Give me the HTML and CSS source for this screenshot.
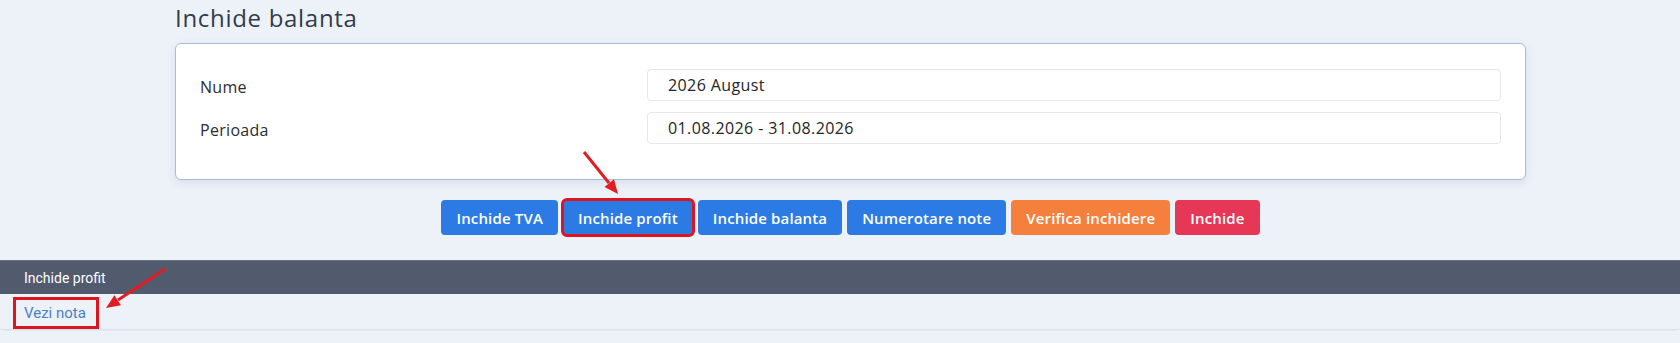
FILE: index.html
```html
<!DOCTYPE html>
<html lang="ro">
<head>
  <meta charset="UTF-8">
  <meta name="viewport" content="width=device-width, initial-scale=1">
  <title>Inchide balanta</title>
  <link rel="stylesheet" href="styles.css">
</head>
<body>
  <div class="page">
    <h2 class="title">Inchide balanta</h2>

    <div class="card">
      <div class="form-row">
        <label for="nume">Nume</label>
        <input type="text" id="nume" value="2026 August">
      </div>
      <div class="form-row">
        <label for="perioada">Perioada</label>
        <input type="text" id="perioada" value="01.08.2026 - 31.08.2026">
      </div>
    </div>

    <div class="actions">
      <button class="btn btn-primary">Inchide TVA</button>
      <button class="btn btn-primary marked">Inchide profit</button>
      <button class="btn btn-primary">Inchide balanta</button>
      <button class="btn btn-primary">Numerotare note</button>
      <button class="btn btn-warning">Verifica inchidere</button>
      <button class="btn btn-danger">Inchide</button>
    </div>
  </div>

  <div class="panel-head">Inchide profit</div>
  <div class="panel-body">
    <a href="#" class="note-link">Vezi nota</a>
  </div>

  <!-- red annotation arrows -->
  <svg class="annot" width="1680" height="343" viewBox="0 0 1680 343">
    <line x1="584" y1="152" x2="609" y2="183" stroke="#e11d24" stroke-width="3"/>
    <polygon points="618,194 604.5,187 614,179.3" fill="#e11d24"/>
    <line x1="165" y1="269" x2="118" y2="300" stroke="#e11d24" stroke-width="3"/>
    <polygon points="106,308 114.4,295.3 121,305.3" fill="#e11d24"/>
  </svg>
</body>
</html>
```

FILE: styles.css
```css
body {
  margin: 0;
  background: #edf2f9;
  font-family: "Open Sans", "Liberation Sans", sans-serif;
  color: #344050;
  position: relative;
  height: 343px;
  overflow: hidden;
}
.page {
  width: 1351px;
  margin-left: 175px;
  padding-top: 4px;
}
.title {
  margin: 0 0 11px;
  font-size: 24px;
  line-height: 28px;
  font-weight: 500;
  letter-spacing: 0.7px;
  color: #313c4c;
}
.card {
  background: #fff;
  border: 1px solid #a9bdd5;
  border-radius: 6px;
  box-shadow: 0 3px 10px rgba(65,90,130,0.12);
  padding: 25px 24px 35px;
  display: grid;
  row-gap: 11px;
}
.form-row {
  display: grid;
  grid-template-columns: 447px 1fr;
  align-items: center;
}
.form-row label {
  font-size: 16px;
  letter-spacing: 0.3px;
  color: #2b2d31;
  padding-top: 3px;
}
.form-row input {
  height: 32px;
  box-sizing: border-box;
  border: 1px solid #e4e7eb;
  border-radius: 4px;
  padding: 0 20px;
  font-family: inherit;
  font-size: 16px;
  letter-spacing: 0.4px;
  color: #232529;
  background: #fff;
  outline: none;
}
.actions {
  display: flex;
  justify-content: center;
  gap: 5px;
  margin-top: 20px;
}
.btn {
  height: 35px;
  padding: 0 15px;
  border: none;
  border-radius: 4px;
  color: #fff;
  font-family: inherit;
  font-size: 15px;
  font-weight: 600;
  letter-spacing: 0.15px;
}
.btn-primary {
  background: #2c7be5;
}
.btn-warning {
  background: #f5803e;
}
.btn-danger {
  background: #e63757;
}
.marked {
  outline: 3px solid #e0141f;
  outline-offset: -1px;
}
.panel-head {
  margin-top: 25px;
  height: 34px;
  line-height: 34px;
  padding-left: 24px;
  background: #525a6e;
  border-top: 1px solid #6b7181;
  box-sizing: border-box;
  color: #fff;
  font-family: Roboto, "Liberation Sans", sans-serif;
  font-size: 14px;
}
.panel-body {
  height: 36px;
  box-sizing: border-box;
  padding-top: 6px;
  border-bottom: 1px solid #dde2ea;
  box-shadow: 0 5px 0 -4px #e3e7ee;
}
.note-link {
  display: inline-block;
  margin-left: 16px;
  padding: 1px 10px 1px 8px;
  line-height: 24px;
  font-family: Roboto, "Liberation Sans", sans-serif;
  font-size: 15px;
  color: #4a80c6;
  text-decoration: none;
  outline: 3px solid #e0141f;
}
.annot {
  position: absolute;
  top: 0;
  left: 0;
  pointer-events: none;
}
```
